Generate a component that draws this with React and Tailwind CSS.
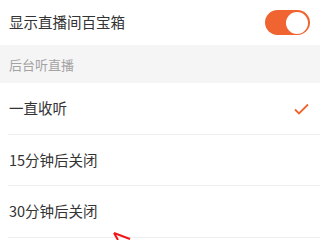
import { useState } from "react"

const options = ["一直收听", "15分钟后关闭", "30分钟后关闭"]

function Toggle({ on, onClick }) {
  return (
    <div
      onClick={onClick}
      className={`w-[45px] h-[25px] rounded-full p-[2px] flex items-center ${on ? "bg-[#ef6430] justify-end" : "bg-[#ddd] justify-start"}`}
    >
      <div className="w-[22px] h-[22px] rounded-full bg-white" />
    </div>
  )
}

export default function App() {
  const [show, setShow] = useState(true)
  const [selected, setSelected] = useState(0)

  return (
    <div className="relative w-[320px] h-[240px] overflow-hidden bg-white font-['Noto_Sans_CJK_SC',sans-serif] text-[#333]">
      {/* top switch row */}
      <div className="h-[45px] flex items-center justify-between pl-[9px] pr-[10px]">
        <span className="text-[14.5px] leading-none">显示直播间百宝箱</span>
        <Toggle on={show} onClick={() => setShow(!show)} />
      </div>

      {/* section header */}
      <div className="h-[38px] bg-[#f5f5f5] flex items-center pl-[9px]">
        <span className="text-[13px] leading-none text-[#a3a3a3]">后台听直播</span>
      </div>

      {/* options */}
      <div className="pl-[8px]">
        {options.map((o, i) => (
          <div
            key={o}
            onClick={() => setSelected(i)}
            className="h-[51.5px] flex items-center justify-between pl-[1px] pr-[11px] border-b border-[#efefef]"
          >
            <span className="text-[14.5px] leading-none">{o}</span>
            {selected === i && (
              <svg width="15" height="12" viewBox="0 0 15 12" className="mt-[2px]">
                <path d="M1 6.5 L5 10.5 L14 1.5" fill="none" stroke="#ef6430" strokeWidth="1.8" />
              </svg>
            )}
          </div>
        ))}
      </div>

      {/* red annotation arrow */}
      <svg className="absolute left-[110px] top-[230px]" width="24" height="12" viewBox="0 0 24 12">
        <path d="M4 3 L20 9 M4 3 L8 10" fill="none" stroke="#f01818" strokeWidth="2" />
      </svg>
    </div>
  )
}
